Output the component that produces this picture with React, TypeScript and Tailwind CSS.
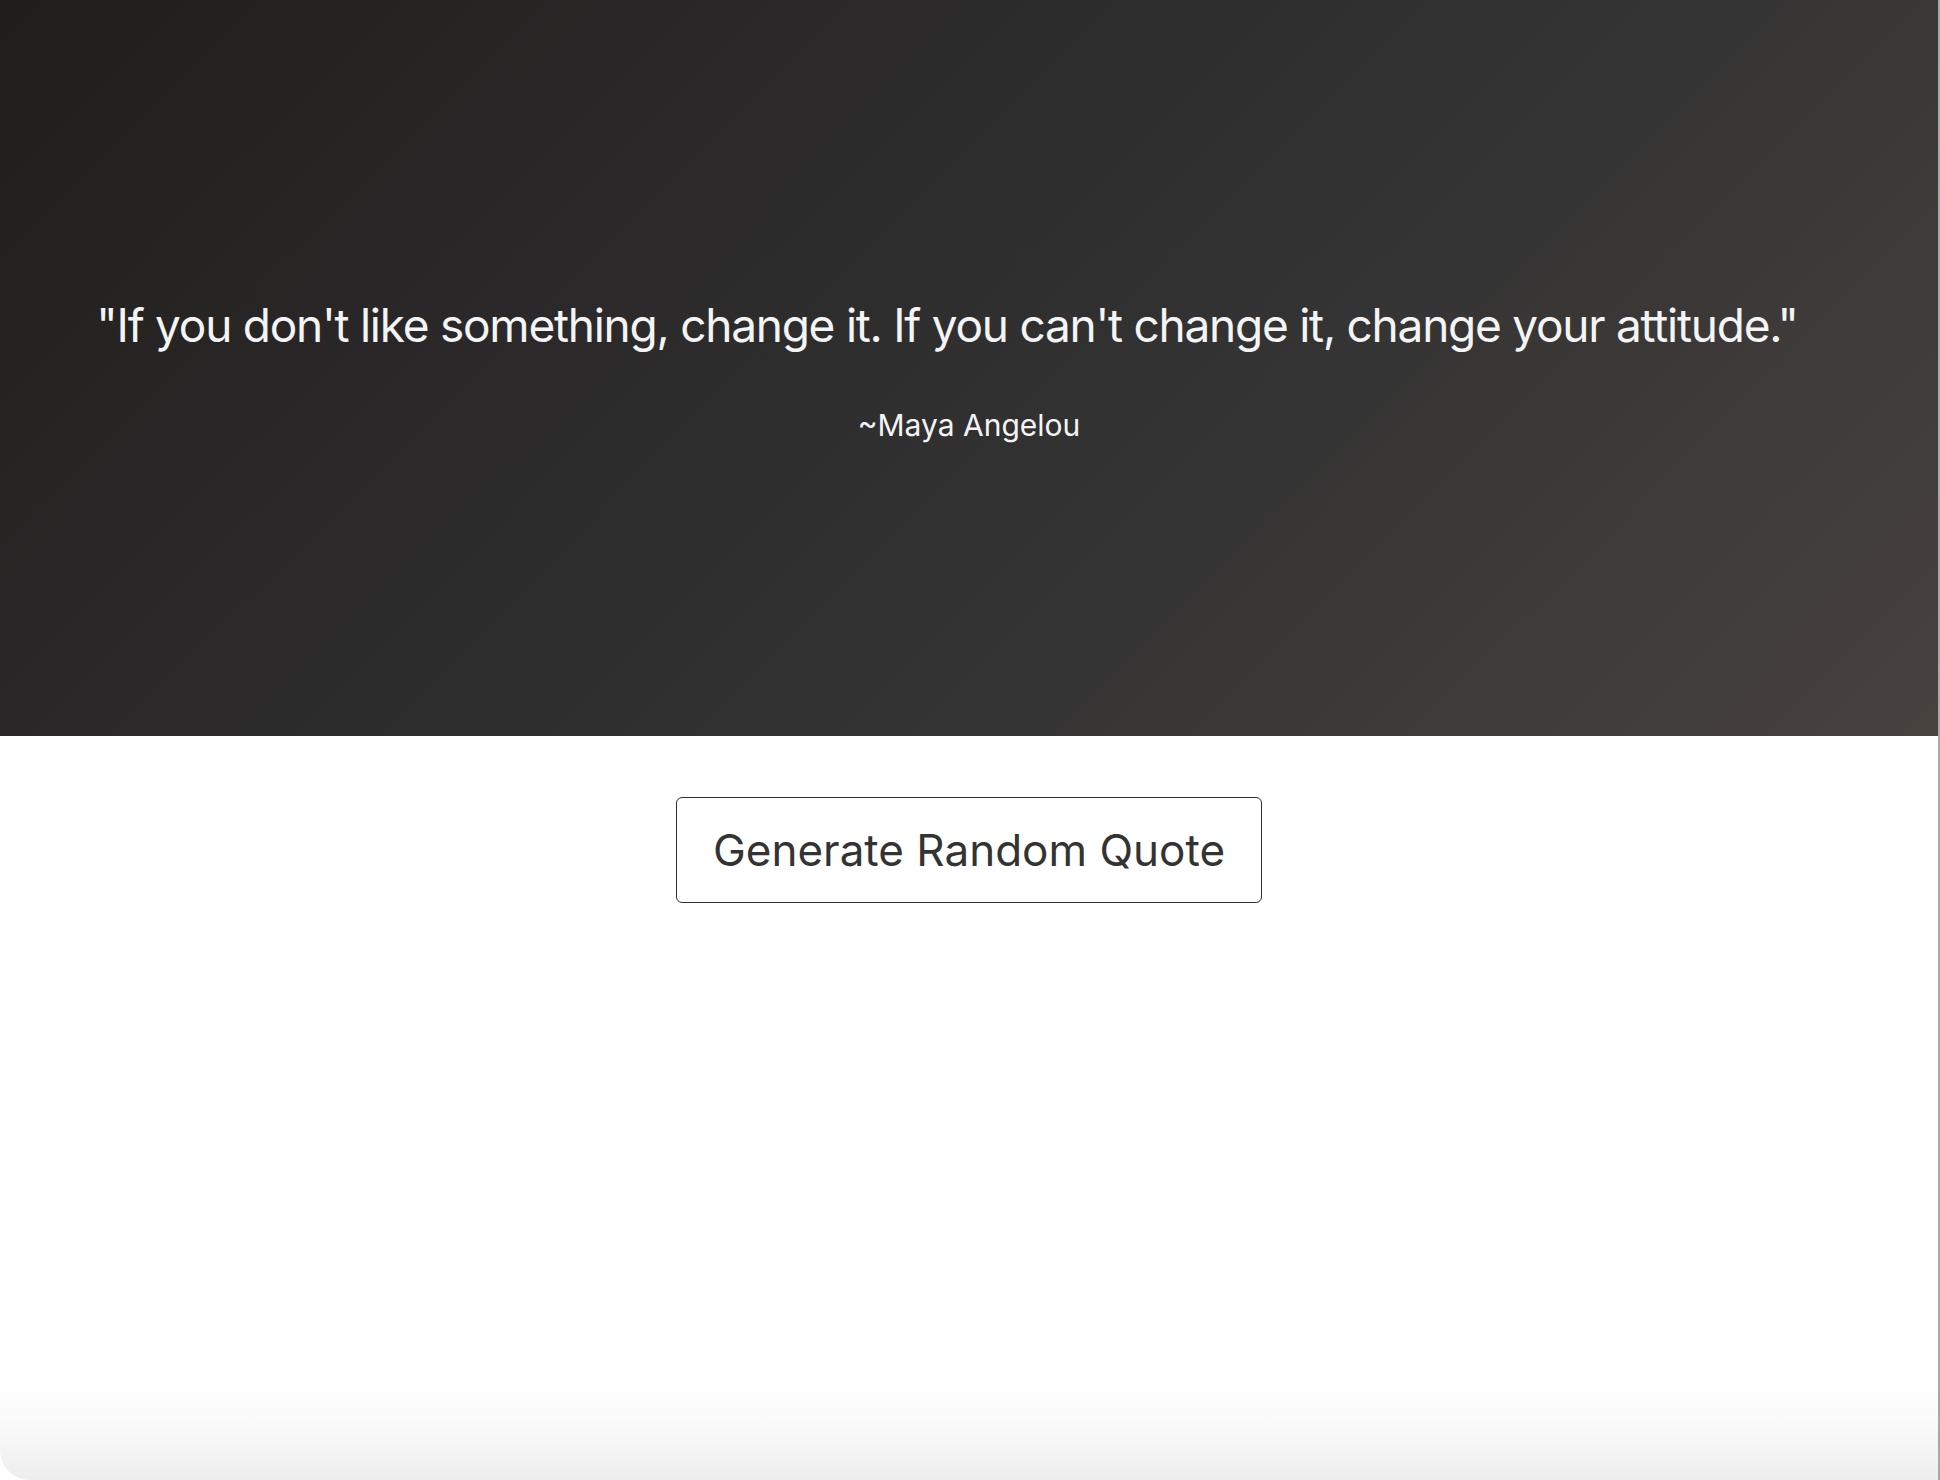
import React from "react";

export default function App() {
  return (
    <div className="flex h-[1480px] w-[1940px] bg-white" style={{ fontFamily: "Inter, 'Noto Sans', sans-serif" }}>
      <div className="relative flex h-full w-[1938px] flex-col">
        <section className="flex h-[736px] flex-col items-center justify-center bg-[linear-gradient(135deg,#211d1d_0%,#333333_60%,#48423f_100%)] pt-[3px]">
          <p className="mr-[44px] text-[46px] leading-[56px] tracking-[-1.25px] text-[#f4f4f4]">
            "If you don't like something, change it. If you can't change it, change your attitude."
          </p>
          <p className="mt-[54px] text-[30px] leading-[36px] text-[#f4f4f4]">~Maya Angelou</p>
        </section>
        <div className="flex justify-center pt-[61px]">
          <button className="flex h-[106px] w-[586px] items-center justify-center rounded-[6px] border-[1.5px] border-[#2e2e2e] bg-white text-[44px] text-[#333]">
            Generate Random Quote
          </button>
        </div>
        <div className="absolute bottom-0 left-0 right-0 h-[100px] rounded-bl-[30px] bg-[linear-gradient(to_bottom,rgba(0,0,0,0)_0%,rgba(0,0,0,0.025)_50%,rgba(0,0,0,0.07)_100%)]" />
      </div>
      <div className="h-full w-[2px] bg-[#a8a8a8]" />
    </div>
  );
}
